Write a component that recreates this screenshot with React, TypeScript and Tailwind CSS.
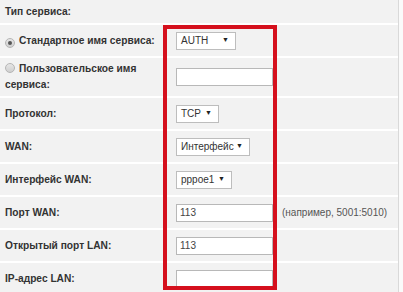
import React from "react";

function Radio({ checked }: { checked?: boolean }) {
  return (
    <span className="mr-[4px] inline-flex h-[10px] w-[10px] translate-y-[1px] items-center justify-center rounded-full border border-[#b5b5b5] bg-gradient-to-b from-[#e6e6e6] to-[#cfcfcf] align-baseline">
      {checked && <span className="h-[4px] w-[4px] rounded-full bg-[#555]" />}
    </span>
  );
}

function Select({ value, w }: { value: string; w: string }) {
  return (
    <div className={`flex h-[18px] items-center justify-between border border-[#bdbdbd] bg-white pl-[4px] pr-[6px] text-[10px] font-normal text-[#333] ${w}`}>
      <span>{value}</span>
      <span className="text-[7px] text-[#222]">▼</span>
    </div>
  );
}

function Input({ value }: { value?: string }) {
  return (
    <div className="flex h-[18px] w-[97px] items-center border border-[#b8b8b8] bg-white px-[3px] text-[10px] font-normal text-[#444]">
      {value}
    </div>
  );
}

type Row = { label: React.ReactNode; h: string; field?: React.ReactNode; hint?: string };

const rows: Row[] = [
  { label: "Тип сервиса:", h: "h-[25px]" },
  {
    label: (
      <span>
        <Radio checked />
        Стандартное имя сервиса:
      </span>
    ),
    h: "h-[33px]",
    field: <Select value="AUTH" w="w-[60px]" />,
  },
  {
    label: (
      <span className="block w-[140px] leading-[16px]">
        <Radio />
        Пользовательское имя сервиса:
      </span>
    ),
    h: "h-[40px]",
    field: <Input />,
  },
  { label: "Протокол:", h: "h-[33px]", field: <Select value="TCP" w="w-[43px]" /> },
  { label: "WAN:", h: "h-[33px]", field: <Select value="Интерфейс" w="w-[74px]" /> },
  { label: "Интерфейс WAN:", h: "h-[33px]", field: <Select value="pppoe1" w="w-[56px]" /> },
  { label: "Порт WAN:", h: "h-[33px]", field: <Input value="113" />, hint: "(например, 5001:5010)" },
  { label: "Открытый порт LAN:", h: "h-[33px]", field: <Input value="113" /> },
  { label: "IP-адрес LAN:", h: "h-[33px]", field: <Input /> },
];

export default function App() {
  return (
    <div className="h-[292px] w-[403px] overflow-hidden bg-[#fafafa] font-['Liberation_Sans',Arial,sans-serif]">
      <div className="relative w-[399px] border-r border-[#d9d9d9] bg-[#f2f2f2]">
        {rows.map((r, i) => (
          <div key={i} className={`flex items-center border-b-2 border-white ${r.h}`}>
            <div className="w-[176px] shrink-0 pl-[5px] text-[10.2px] font-bold text-[#333]">{r.label}</div>
            {r.field}
            {r.hint && <span className="ml-[9px] text-[10px] text-[#555]">{r.hint}</span>}
          </div>
        ))}
        {/* выделение */}
        <div className="absolute left-[163px] top-[25px] h-[265px] w-[114px] border-4 border-[#d5101d]" />
      </div>
    </div>
  );
}
